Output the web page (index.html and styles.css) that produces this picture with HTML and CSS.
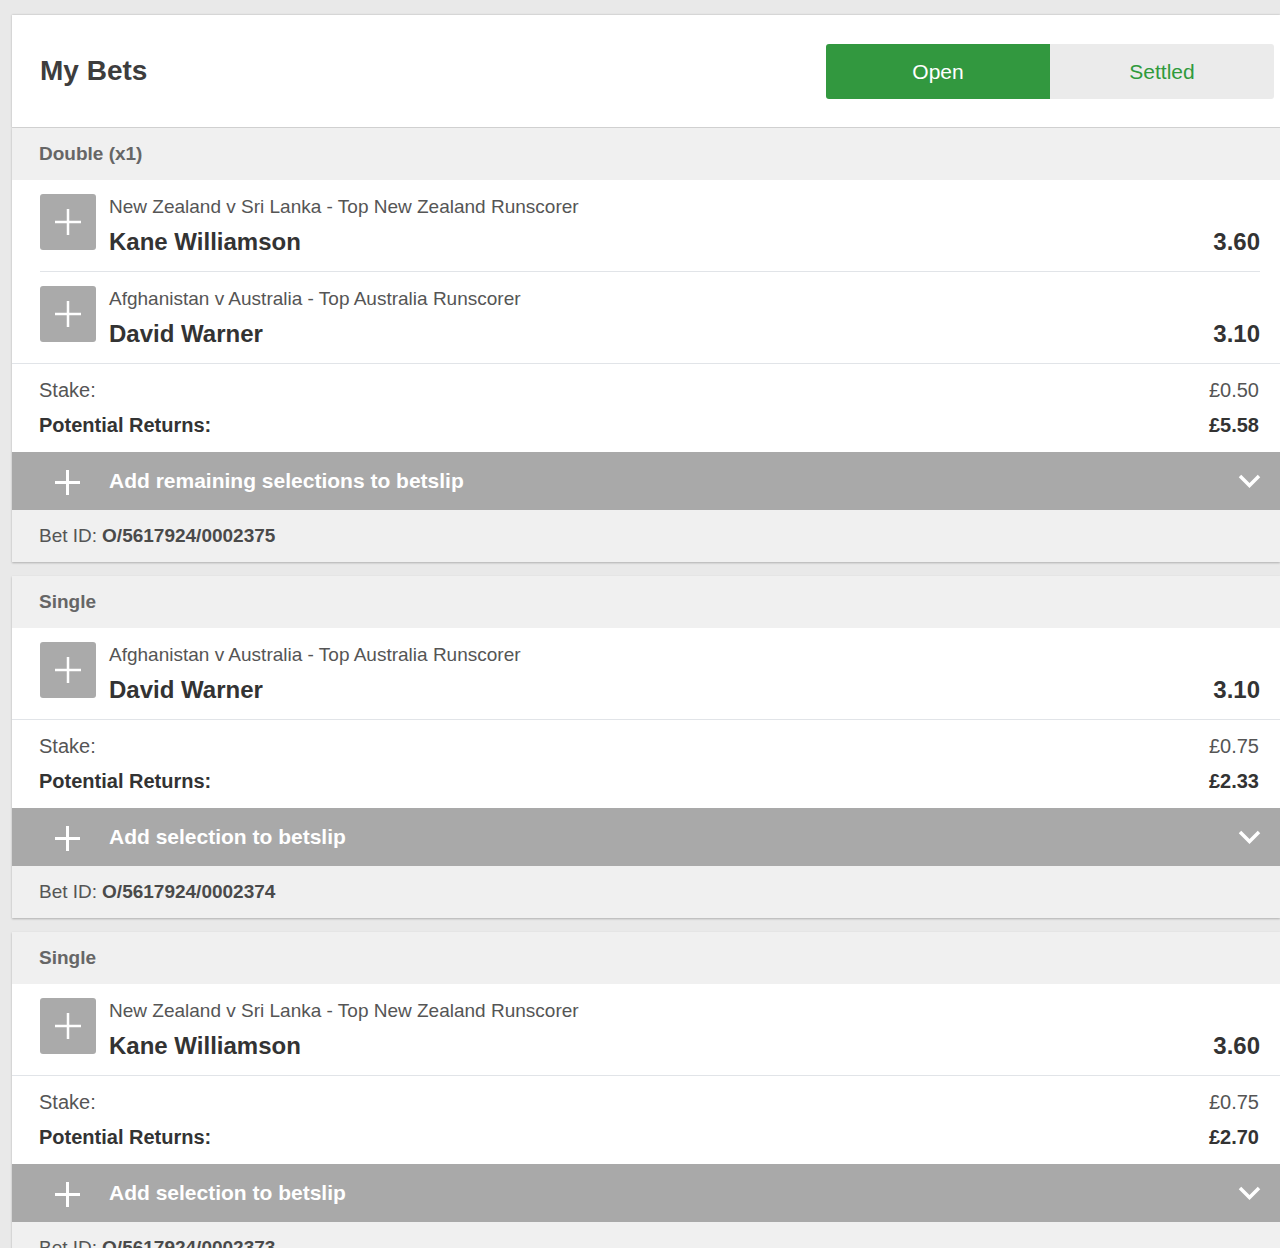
FILE: index.html
```html
<!DOCTYPE html>
<html lang="en">
  <head>
    <meta charset="UTF-8" />
    <meta name="viewport" content="width=device-width, initial-scale=1.0" />
    <title>My Bets</title>
    <link rel="stylesheet" href="styles.css">
  </head>
  <body>
    <div class="page">
      <header class="panel-head">
        <h1>My Bets</h1>
        <div class="tabs">
          <button class="tab active">Open</button>
          <button class="tab">Settled</button>
        </div>
      </header>

      <div class="bets">
        <section class="bet">
          <div class="bet-type">Double (x1)</div>
          <div class="legs">
            <div class="leg">
              <span class="leg-add">
                <svg width="26" height="26" viewBox="0 0 26 26"><path d="M13 0v26M0 13h26" stroke="#fff" stroke-width="2.5"/></svg>
              </span>
              <div class="leg-info">
                <div class="leg-market">New Zealand v Sri Lanka - Top New Zealand Runscorer</div>
                <div class="leg-line">
                  <span class="leg-name">Kane Williamson</span>
                  <span class="leg-odds">3.60</span>
                </div>
              </div>
            </div>
            <div class="leg">
              <span class="leg-add">
                <svg width="26" height="26" viewBox="0 0 26 26"><path d="M13 0v26M0 13h26" stroke="#fff" stroke-width="2.5"/></svg>
              </span>
              <div class="leg-info">
                <div class="leg-market">Afghanistan v Australia - Top Australia Runscorer</div>
                <div class="leg-line">
                  <span class="leg-name">David Warner</span>
                  <span class="leg-odds">3.10</span>
                </div>
              </div>
            </div>
          </div>
          <div class="totals">
            <div class="totals-row"><span>Stake:</span><span>£0.50</span></div>
            <div class="totals-row strong"><span>Potential Returns:</span><span>£5.58</span></div>
          </div>
          <button class="readd">
            <svg class="readd-plus" width="25" height="25" viewBox="0 0 25 25"><path d="M12.5 0v25M0 12.5h25" stroke="#fff" stroke-width="3"/></svg>
            <span>Add remaining selections to betslip</span>
            <svg class="readd-arrow" width="23" height="14" viewBox="0 0 23 14"><path d="M2 2l9.5 9.5L21 2" fill="none" stroke="#fff" stroke-width="3.5"/></svg>
          </button>
          <div class="bet-id">Bet ID: <b>O/5617924/0002375</b></div>
        </section>

        <section class="bet">
          <div class="bet-type">Single</div>
          <div class="legs">
            <div class="leg">
              <span class="leg-add">
                <svg width="26" height="26" viewBox="0 0 26 26"><path d="M13 0v26M0 13h26" stroke="#fff" stroke-width="2.5"/></svg>
              </span>
              <div class="leg-info">
                <div class="leg-market">Afghanistan v Australia - Top Australia Runscorer</div>
                <div class="leg-line">
                  <span class="leg-name">David Warner</span>
                  <span class="leg-odds">3.10</span>
                </div>
              </div>
            </div>
          </div>
          <div class="totals">
            <div class="totals-row"><span>Stake:</span><span>£0.75</span></div>
            <div class="totals-row strong"><span>Potential Returns:</span><span>£2.33</span></div>
          </div>
          <button class="readd">
            <svg class="readd-plus" width="25" height="25" viewBox="0 0 25 25"><path d="M12.5 0v25M0 12.5h25" stroke="#fff" stroke-width="3"/></svg>
            <span>Add selection to betslip</span>
            <svg class="readd-arrow" width="23" height="14" viewBox="0 0 23 14"><path d="M2 2l9.5 9.5L21 2" fill="none" stroke="#fff" stroke-width="3.5"/></svg>
          </button>
          <div class="bet-id">Bet ID: <b>O/5617924/0002374</b></div>
        </section>

        <section class="bet">
          <div class="bet-type">Single</div>
          <div class="legs">
            <div class="leg">
              <span class="leg-add">
                <svg width="26" height="26" viewBox="0 0 26 26"><path d="M13 0v26M0 13h26" stroke="#fff" stroke-width="2.5"/></svg>
              </span>
              <div class="leg-info">
                <div class="leg-market">New Zealand v Sri Lanka - Top New Zealand Runscorer</div>
                <div class="leg-line">
                  <span class="leg-name">Kane Williamson</span>
                  <span class="leg-odds">3.60</span>
                </div>
              </div>
            </div>
          </div>
          <div class="totals">
            <div class="totals-row"><span>Stake:</span><span>£0.75</span></div>
            <div class="totals-row strong"><span>Potential Returns:</span><span>£2.70</span></div>
          </div>
          <button class="readd">
            <svg class="readd-plus" width="25" height="25" viewBox="0 0 25 25"><path d="M12.5 0v25M0 12.5h25" stroke="#fff" stroke-width="3"/></svg>
            <span>Add selection to betslip</span>
            <svg class="readd-arrow" width="23" height="14" viewBox="0 0 23 14"><path d="M2 2l9.5 9.5L21 2" fill="none" stroke="#fff" stroke-width="3.5"/></svg>
          </button>
          <div class="bet-id">Bet ID: <b>O/5617924/0002373</b></div>
        </section>
      </div>
    </div>
  </body>
</html>
```

FILE: styles.css
```css
* {
  box-sizing: border-box;
}

html,
body {
  margin: 0;
  padding: 0;
}

body {
  background: #e9e9e9;
  font-family: "Liberation Sans", Arial, sans-serif;
  color: #333;
}

.page {
  padding: 15px 0 0 12px;
}

/* header */

.panel-head {
  height: 113px;
  display: flex;
  align-items: center;
  justify-content: space-between;
  padding: 0 6px 1px 28px;
  background: #fff;
  border-bottom: 1px solid #d4d4d4;
  box-shadow: 0 0 2px rgba(0, 0, 0, 0.25);
}

.panel-head h1 {
  margin: 0;
  font-size: 28px;
  font-weight: bold;
  color: #3d3d3d;
}

.tabs {
  display: flex;
  margin-top: 2px;
  border-radius: 3px;
  overflow: hidden;
}

.tab {
  width: 224px;
  height: 55px;
  border: 0;
  margin: 0;
  padding: 0;
  font-family: inherit;
  font-size: 21px;
  background: #ebebeb;
  color: #2f9a3c;
}

.tab.active {
  background: #32983f;
  color: #fff;
}

/* bets */

.bets {
  display: flex;
  flex-direction: column;
  gap: 14px;
}

.bet {
  background: #fff;
  box-shadow: 0 1px 2px rgba(0, 0, 0, 0.25);
}

.bet-type {
  height: 52px;
  display: flex;
  align-items: center;
  padding-left: 27px;
  background: #f0f0f0;
  font-size: 19px;
  font-weight: bold;
  color: #666;
}

.legs {
  padding: 0 20px 0 28px;
  border-bottom: 1px solid #e1e4e8;
}

.leg {
  display: flex;
  gap: 13px;
  padding: 14px 0 13px;
  border-bottom: 1px solid #e1e4e8;
}

.leg:last-child {
  border-bottom: 0;
}

.leg-add {
  flex: none;
  width: 56px;
  height: 56px;
  display: flex;
  align-items: center;
  justify-content: center;
  background: #aaa;
  border-radius: 3px;
}

.leg-info {
  flex: 1;
}

.leg-market {
  font-size: 19px;
  line-height: 26px;
  color: #555;
}

.leg-line {
  display: flex;
  justify-content: space-between;
  margin-top: 6px;
  line-height: 32px;
  font-size: 24px;
  font-weight: bold;
  color: #333;
}

.totals {
  padding: 14px 21px 15px 27px;
}

.totals-row {
  display: flex;
  justify-content: space-between;
  font-size: 20px;
  line-height: 24px;
  color: #555;
}

.totals-row + .totals-row {
  margin-top: 11px;
}

.totals-row.strong {
  font-weight: bold;
  color: #333;
}

.readd {
  width: 100%;
  height: 58px;
  display: flex;
  align-items: center;
  margin: 0;
  padding: 0 19px 0 43px;
  border: 0;
  background: #a9a9a9;
  font-family: inherit;
  font-size: 21px;
  font-weight: bold;
  color: #fff;
  text-align: left;
}

.readd-plus {
  margin-right: 29px;
  margin-top: 2px;
}

.readd-arrow {
  margin-left: auto;
}

.bet-id {
  height: 52px;
  display: flex;
  align-items: center;
  gap: 5px;
  padding-left: 27px;
  background: #f0f0f0;
  font-size: 19px;
  color: #555;
}

.bet-id b {
  color: #4a4a4a;
}
```
